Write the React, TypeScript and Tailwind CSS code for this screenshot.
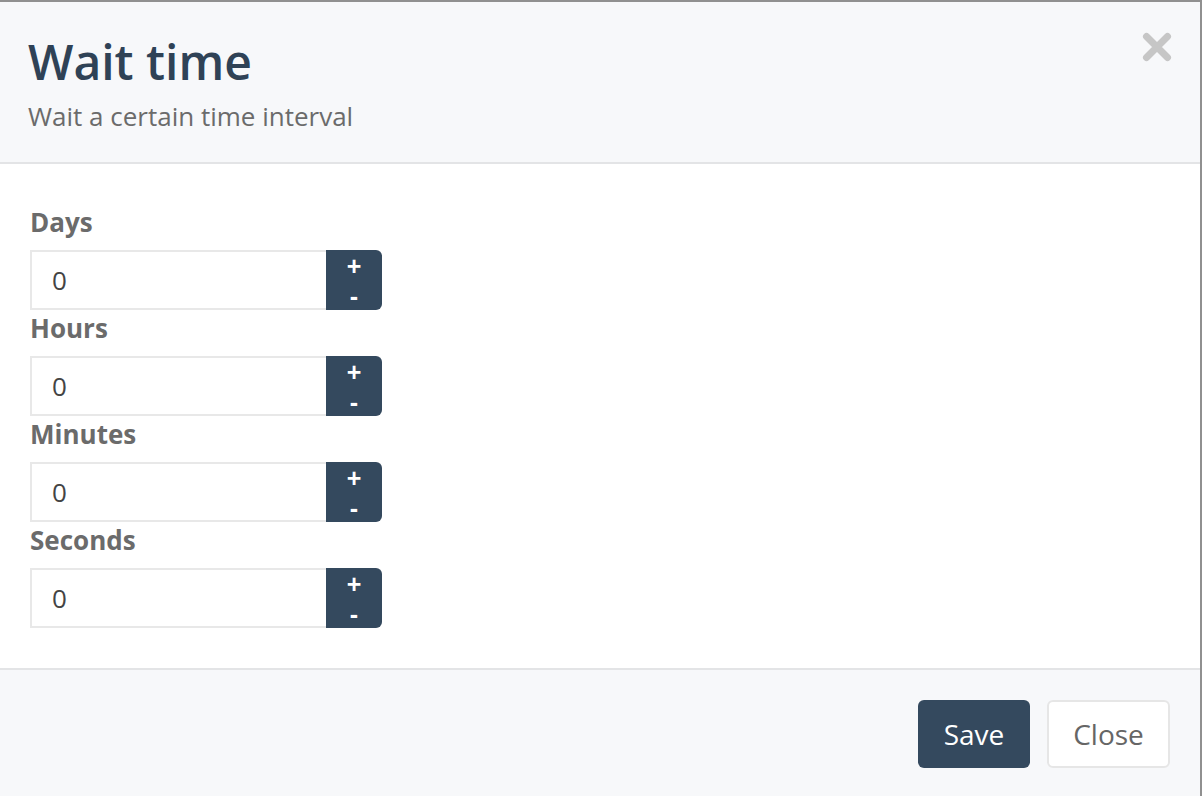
import React from "react";

const fields = ["Days", "Hours", "Minutes", "Seconds"];

function NumberField({ label }: { label: string }) {
  return (
    <div className="flex flex-col">
      <label className="text-[26px] leading-[36px] font-bold text-[#6b6b6b]">{label}</label>
      <div className="mt-[10px] flex h-[60px] w-[352px]">
        <input
          type="text"
          defaultValue="0"
          className="h-full w-[296px] border-2 border-r-0 border-[#e8e8e8] bg-white pl-[20px] text-[26px] text-[#444] outline-none"
          style={{ fontFamily: "'Open Sans', sans-serif" }}
        />
        <div className="flex h-full w-[56px] flex-col rounded-r-[6px] bg-[#34495e] font-['Liberation_Sans',sans-serif] text-white">
          <button className="h-[30px] w-full pt-[2px] text-[25px] leading-[28px] font-bold">+</button>
          <button className="h-[30px] w-full pt-[2px] text-[25px] leading-[28px] font-bold">-</button>
        </div>
      </div>
    </div>
  );
}

export default function App() {
  return (
    <div
      className="flex h-[796px] w-[1202px] flex-col border-t-2 border-r-2 border-[#909090] bg-white"
      style={{ fontFamily: "'Open Sans', sans-serif" }}
    >
      <div className="relative h-[162px] shrink-0 border-b-2 border-[#e3e4e6] bg-[#f7f8fa] pl-[28px] pt-[34px]">
        <h1 className="text-[48px] leading-[52px] font-semibold text-[#2f4256]">Wait time</h1>
        <p className="mt-[10px] text-[26px] leading-[36px] text-[#6b6b6b]">Wait a certain time interval</p>
        <button className="absolute right-[28px] top-[30px]">
          <svg width="30" height="30" viewBox="0 0 30 30">
            <path d="M4.5 4.5 L25.5 25.5 M25.5 4.5 L4.5 25.5" stroke="#c6c6c6" strokeWidth="7" strokeLinecap="round" />
          </svg>
        </button>
      </div>
      <div className="flex h-[506px] shrink-0 flex-col border-b-2 border-[#e3e4e6] px-[30px] pt-[40px]">
        {fields.map((f) => (
          <NumberField key={f} label={f} />
        ))}
      </div>
      <div className="flex flex-1 items-start justify-end gap-[17px] bg-[#f7f8fa] pr-[30px] pt-[30px]">
        <button className="h-[68px] w-[112px] rounded-[6px] bg-[#34495e] text-[28px] text-white">Save</button>
        <button className="h-[68px] w-[123px] rounded-[6px] border-2 border-[#e6e6e6] bg-white text-[28px] text-[#666]">
          Close
        </button>
      </div>
    </div>
  );
}
